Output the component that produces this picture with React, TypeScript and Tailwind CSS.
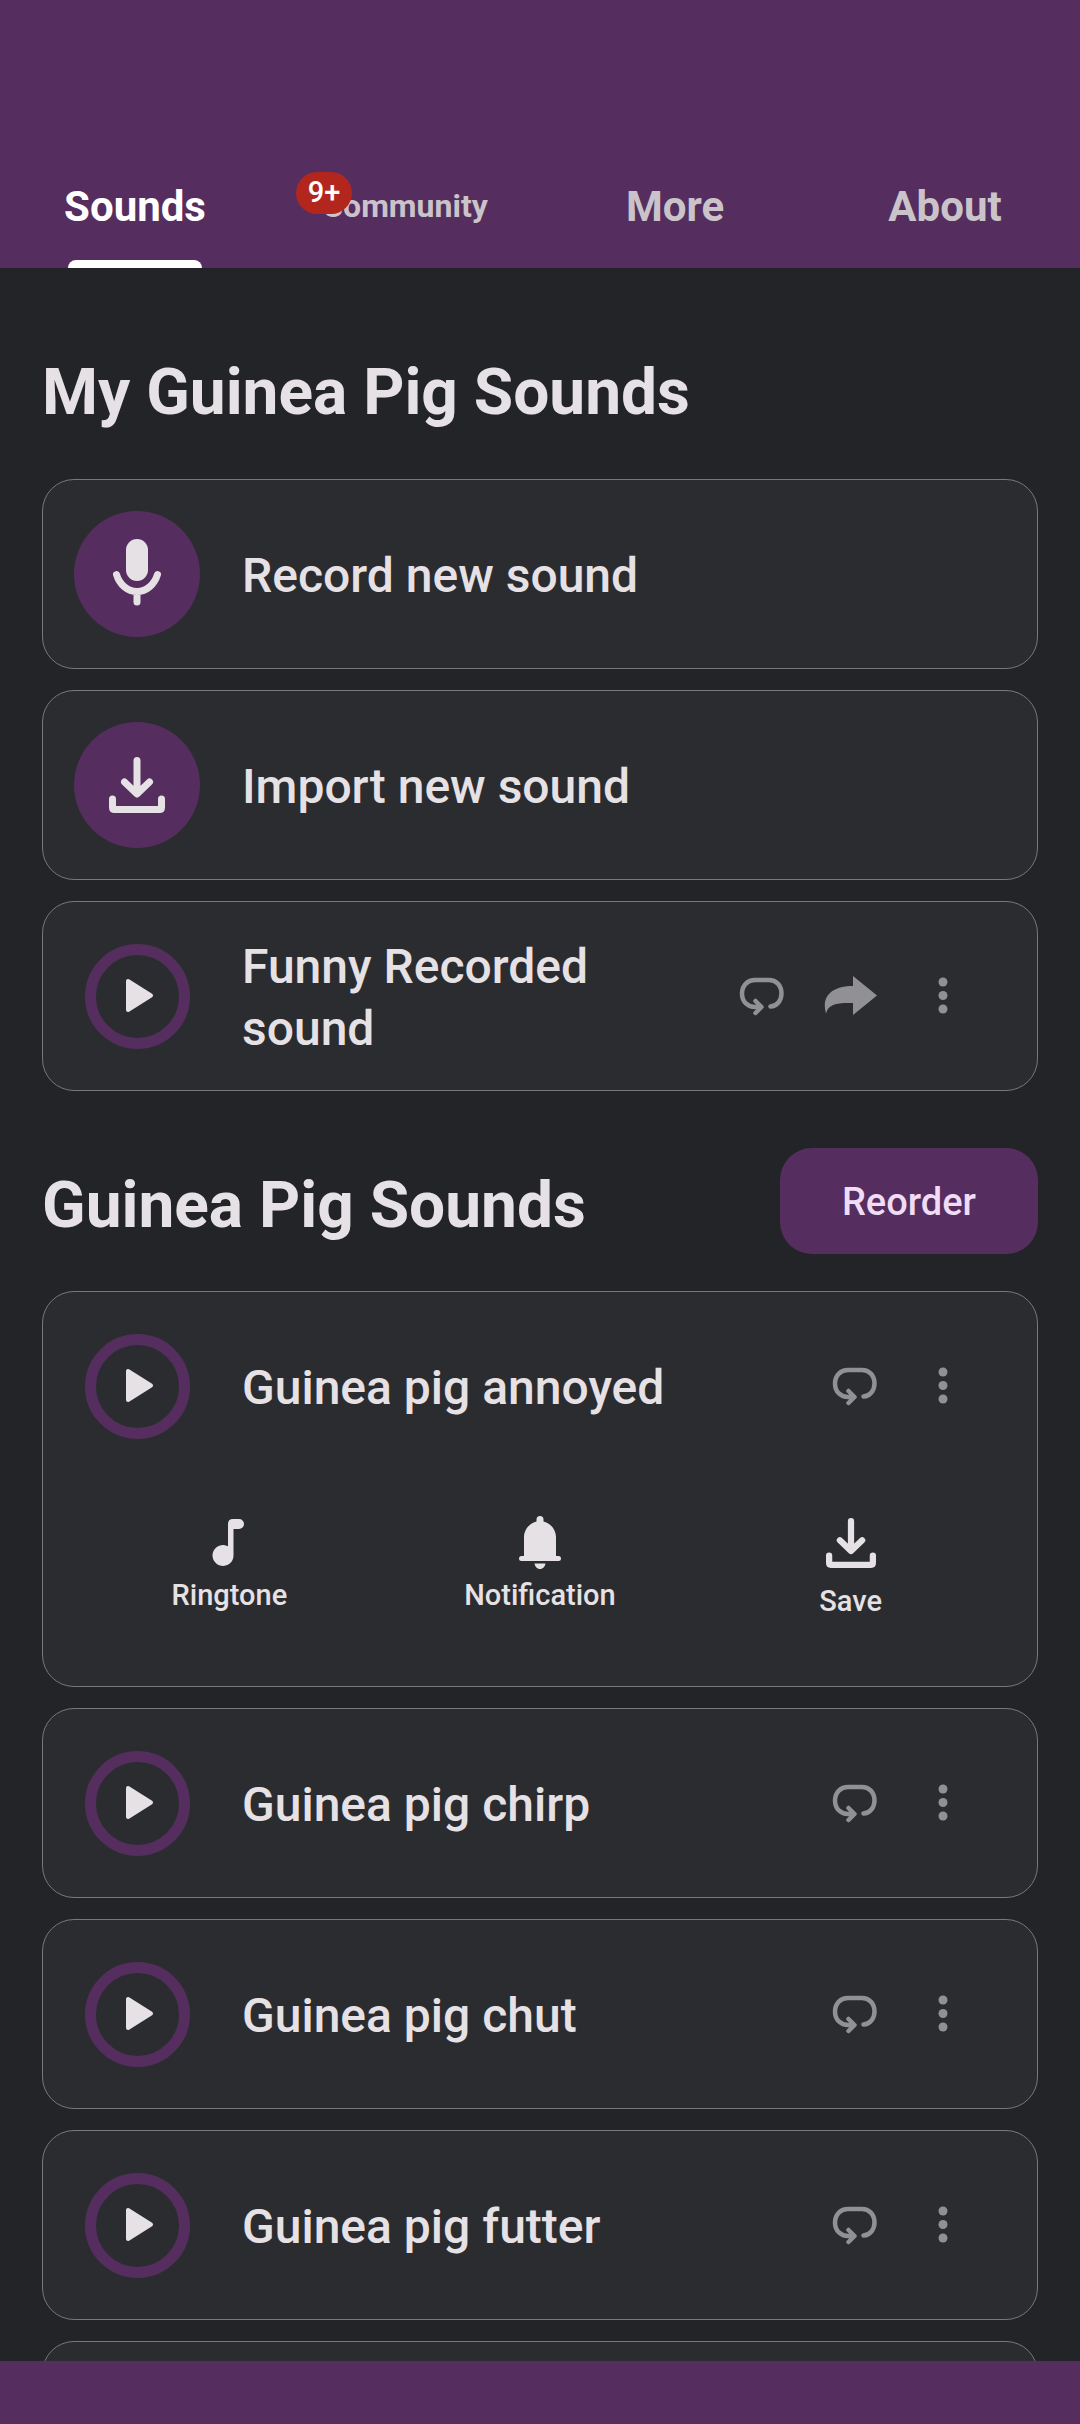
import React from "react";

type IconProps = { className?: string };

function MicIcon() {
  return (
    <svg className="size-[70px]" viewBox="0 0 70 70" fill="none" aria-hidden="true">
      <rect x="24" y="0" width="22" height="42" rx="11" fill="currentColor" />
      <path d="M14.500 35.500c3 10 11 17 20.500 17s17.500-7 20.500-17M35 54v9" stroke="currentColor" strokeWidth="7" strokeLinecap="round" />
    </svg>
  );
}

function DownloadIcon({ className }: IconProps) {
  return (
    <svg className={className} viewBox="0 0 56 56" fill="none" aria-hidden="true">
      <path
        d="M28 3.500v33M15.500 25l12.500 12 12.500-12M3.500 42v8.500q0 2 2 2h45q2 0 2-2V42"
        stroke="currentColor"
        strokeWidth="7"
        strokeLinecap="round"
        strokeLinejoin="round"
      />
    </svg>
  );
}

function PlayIcon() {
  return (
    <svg className="size-[105px]" viewBox="0 0 105 105" aria-hidden="true">
      <circle cx="52.500" cy="52.500" r="47" fill="none" stroke="#552e5f" strokeWidth="11" />
      <path d="M43 37v29l23-14.500z" fill="currentColor" stroke="currentColor" strokeWidth="4" strokeLinejoin="round" />
    </svg>
  );
}

function LoopIcon() {
  return (
    <svg className="h-10 w-[46px]" viewBox="0 0 46 40" fill="none" aria-hidden="true">
      <path
        d="M31.500 30.500C38 30 42.500 24.500 42.500 17.500 42.500 9 37 4 30 4H16C9 4 3 9 3 17.500 3 26 9 31 16 31h5M16.500 25l6 6-6 6"
        stroke="currentColor"
        strokeWidth="4.500"
        strokeLinecap="round"
        strokeLinejoin="round"
      />
    </svg>
  );
}

function ShareIcon() {
  return (
    <svg className="h-10 w-[54px]" viewBox="0 0 54 40" fill="currentColor" aria-hidden="true">
      <path d="M29 0 53 19.500 29 39V27C14 26.500 4 28 2 37.500-3 20 8 10 29 10Z" />
    </svg>
  );
}

function DotsIcon() {
  return (
    <svg className="h-10 w-3" viewBox="0 0 12 40" fill="currentColor" aria-hidden="true">
      <circle cx="6" cy="6" r="4.500" />
      <circle cx="6" cy="19.500" r="4.500" />
      <circle cx="6" cy="33" r="4.500" />
    </svg>
  );
}

function NoteIcon() {
  return (
    <svg className="h-[54px] w-9" viewBox="0 0 36 54" fill="currentColor" aria-hidden="true">
      <path d="M17 30.250V8q0-5 5-5h6a5 5 0 0 1 0 10h-5.500v26.500A10.500 10.500 0 1 1 17 30.250Z" />
    </svg>
  );
}

function BellIcon() {
  return (
    <svg className="h-[54px] w-11" viewBox="0 0 44 54" fill="currentColor" aria-hidden="true">
      <path d="M22 0a3.500 3.500 0 0 1 3.500 3.500V5.500C33 7.500 38 14 38 21v19h2.500a2.500 2.500 0 0 1 0 5h-37a2.500 2.500 0 0 1 0-5H6V21C6 14 11 7.500 18.500 5.500V3.500A3.500 3.500 0 0 1 22 0ZM16.500 47.500h11c-.5 3-2.500 5.500-5.500 5.500s-5-2.500-5.500-5.500Z" />
    </svg>
  );
}

const card = "flex flex-col rounded-[32px] border border-[#77787b] bg-[#2b2c2f]";
const cardTitle = "flex-1 pt-1 text-[48px] leading-[62px] font-medium";
const heading = "text-[64px] leading-[96px] font-bold";

function ActionCard({ label, children }: { label: string; children: React.ReactNode }) {
  return (
    <button className={card + " w-full text-left"}>
      <span className="flex min-h-[188px] w-full items-center gap-[42px] px-[31px]">
        <span className="flex size-[126px] shrink-0 items-center justify-center rounded-full bg-[#552e5f]">{children}</span>
        <span className={cardTitle}>{label}</span>
      </span>
    </button>
  );
}

function SoundCard({ name, share, children }: { name: string; share?: boolean; children?: React.ReactNode }) {
  return (
    <article className={card}>
      <div className="flex min-h-[188px] items-center gap-[42px] pr-[50px] pl-[31px]">
        <button aria-label={"Play " + name} className="flex w-[126px] shrink-0 justify-center">
          <PlayIcon />
        </button>
        <h2 className={cardTitle}>{name}</h2>
        <div className="flex shrink-0 text-[#919094]">
          <button aria-label={"Loop " + name} className="flex w-[88px] justify-center">
            <LoopIcon />
          </button>
          {share && (
            <button aria-label={"Share " + name} className="flex w-[93px] justify-center pr-1">
              <ShareIcon />
            </button>
          )}
          <button aria-label={"More options for " + name} className="flex w-[88px] justify-center">
            <DotsIcon />
          </button>
        </div>
      </div>
      {children}
    </article>
  );
}

function Tool({ label, children }: { label: string; children: React.ReactNode }) {
  return (
    <button className="flex flex-col items-center gap-1.5 text-[29px] leading-[38px] font-medium">
      {children}
      <span>{label}</span>
    </button>
  );
}

const tab = "relative flex h-[126px] items-center justify-center pt-0.5 font-bold";

export default function App() {
  return (
    <div className="flex h-screen flex-col bg-[#232427] font-[Roboto,sans-serif] text-[#e6e1e5]">
      <header className="shrink-0 bg-[#552e5f] pt-[142px]">
        <nav className="grid grid-cols-4 text-[42px] text-[#cac4ca]">
          <a href="#sounds" aria-current="page" className={tab + " text-white"}>
            Sounds
            <span className="absolute bottom-0 h-2 w-[134px] rounded-t-lg bg-white" />
          </a>
          <a href="#community" className={tab + " text-[32px]"}>
            <span className="relative">
              Community
              <span className="absolute -top-2.5 -left-[26px] flex h-[42px] w-14 items-center justify-center rounded-full bg-[#b3261e] text-[29px] font-medium text-white">
                9+
              </span>
            </span>
          </a>
          <a href="#more" className={tab}>
            More
          </a>
          <a href="#about" className={tab}>
            About
          </a>
        </nav>
      </header>

      <main className="min-h-0 flex-1 overflow-hidden px-[42px]">
        <h1 className={heading + " pt-[77px]"}>My Guinea Pig Sounds</h1>
        <section className="mt-[38px] flex flex-col gap-[21px]">
          <ActionCard label="Record new sound">
            <MicIcon />
          </ActionCard>
          <ActionCard label="Import new sound">
            <DownloadIcon className="size-14" />
          </ActionCard>
          <SoundCard name="Funny Recorded sound" share />
        </section>

        <div className="mt-[57px] flex items-end justify-between">
          <h1 className={heading}>Guinea Pig Sounds</h1>
          <button className="h-[106px] rounded-[32px] bg-[#552e5f] px-[62px] pt-0.5 text-[38px] font-medium text-[#f0dcf5]">
            Reorder
          </button>
        </div>

        <section className="mt-[37px] flex flex-col gap-[21px]">
          <SoundCard name="Guinea pig annoyed">
            <div className="grid grid-cols-3 items-start px-[31px] pt-9 pb-[66px]">
              <Tool label="Ringtone">
                <NoteIcon />
              </Tool>
              <Tool label="Notification">
                <BellIcon />
              </Tool>
              <Tool label="Save">
                <span className="flex h-[60px] items-start pt-0.5">
                  <DownloadIcon className="size-[50px]" />
                </span>
              </Tool>
            </div>
          </SoundCard>
          <SoundCard name="Guinea pig chirp" />
          <SoundCard name="Guinea pig chut" />
          <SoundCard name="Guinea pig futter" />
          <div className={card + " min-h-[190px]"} />
        </section>
      </main>

      <footer className="h-[63px] shrink-0 bg-[#552e5f]" />
    </div>
  );
}
